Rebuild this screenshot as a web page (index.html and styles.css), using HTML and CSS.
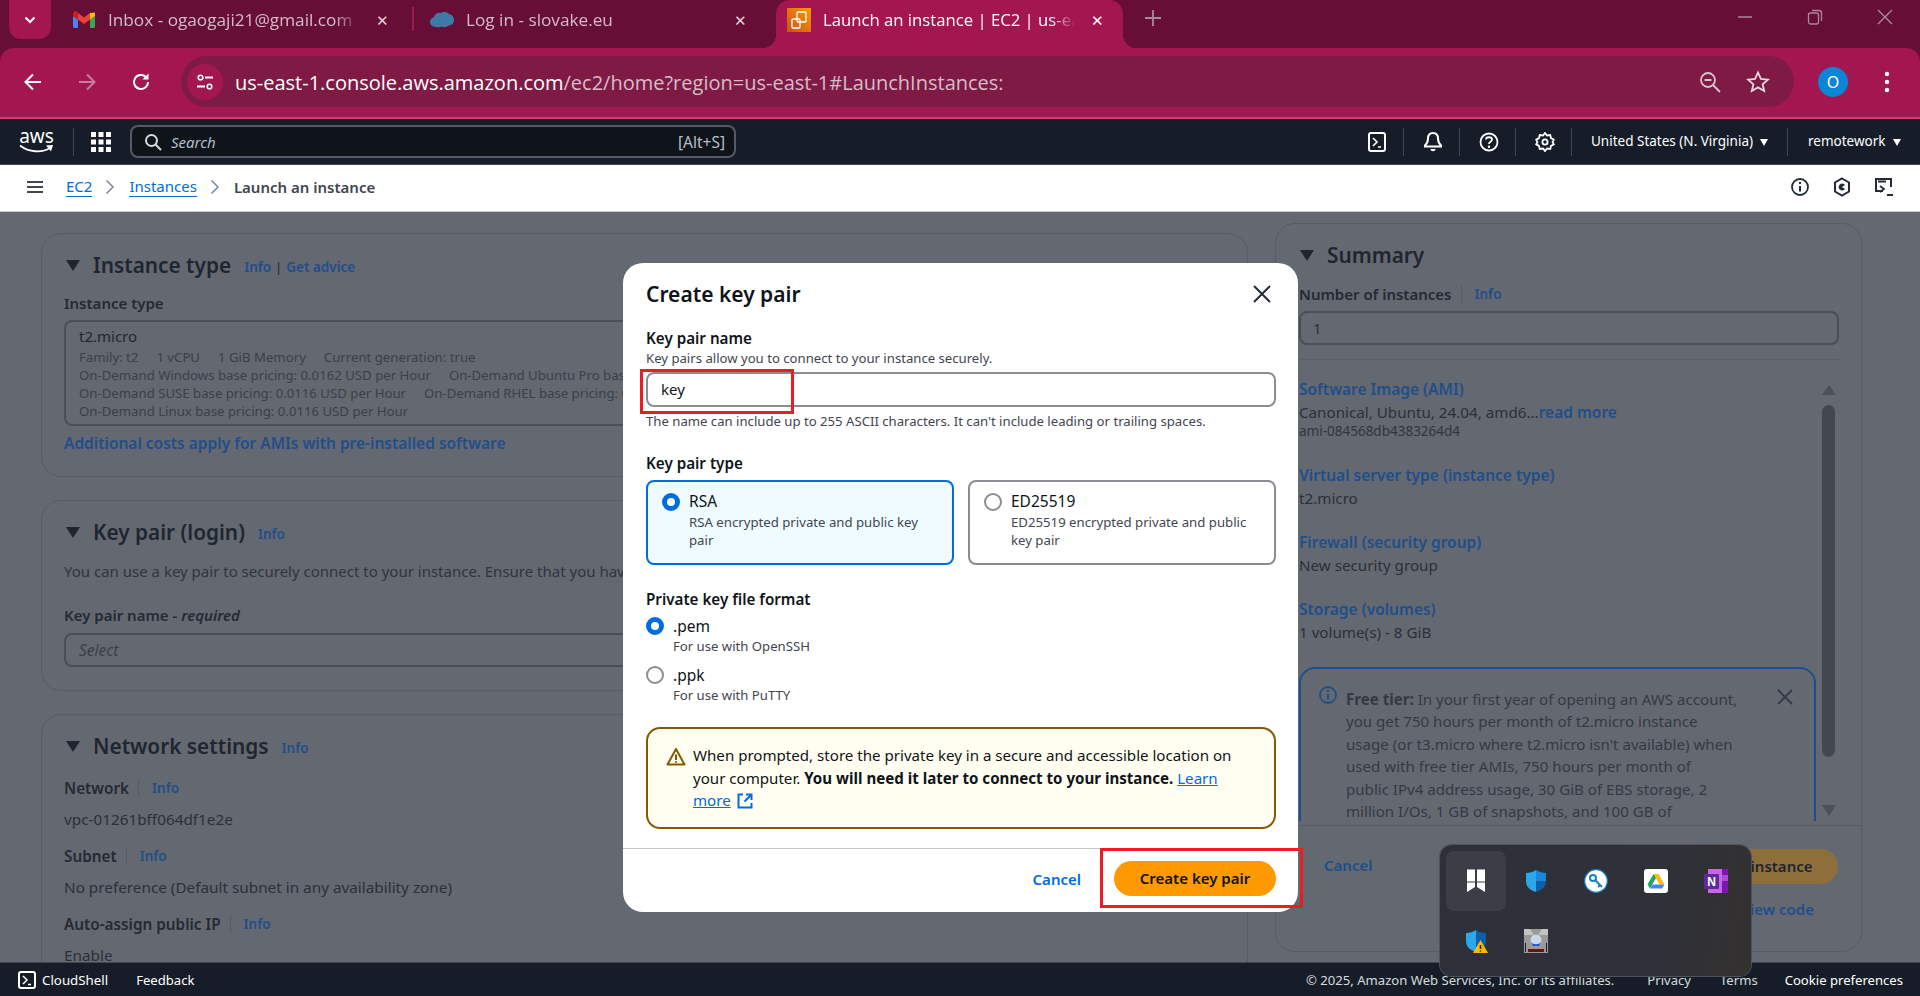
FILE: index.html
```html
<!DOCTYPE HTML>
<html>
<head>
    <title>Launch an instance | EC2 | us-east-1</title>
    <link rel="stylesheet" href="styles.css">
</head>
<body>
<div class="page">

    <div class="tabstrip">
        <div class="tabsearch">
            <svg width="14" height="14" viewBox="0 0 14 14"><path d="M2.5 4.5 7 9l4.5-4.5" fill="none" stroke="#fff" stroke-width="2"/></svg>
        </div>
        <div class="tab first">
            <svg class="favicon" width="22" height="17" viewBox="0 0 22 17">
                <path d="M1.5 17A1.5 1.5 0 0 1 0 15.5V5l5 3.5V17z" fill="#4285f4"/>
                <path d="M17 17V8.5L22 5v10.5a1.5 1.5 0 0 1-1.5 1.5z" fill="#34a853"/>
                <path d="M17 2 22 1.5V5l-5 3.5z" fill="#fbbc04"/>
                <path d="M5 8.5V2l6 4.5L17 2v6.5L11 13z" fill="#ea4335"/>
                <path d="M0 5V2.7C0 .6 2.4-.6 4 .6L5 2v6.5z" fill="#c5221f"/>
            </svg>
            <span class="tabtitle">Inbox - ogaogaji21@gmail.com</span>
            <span class="tabclose">&#10005;</span>
        </div>
        <div class="tabsep"></div>
        <div class="tab second">
            <svg class="favicon" width="24" height="16" viewBox="0 0 24 16"><path d="M6 15C2 15 0 12.5 0 10s1.5-4 3.5-4.5C5 2 8 0 11 1c2-1.5 6-1.5 8 1 3 .5 5 3 5 6s-2 5.5-5.5 5.5c-2 2-5 2-7 1-2 1-4 1-5.5.5z" fill="#3d7aa6"/></svg>
            <span class="tabtitle">Log in - slovake.eu</span>
            <span class="tabclose">&#10005;</span>
        </div>
        <div class="tab active">
            <svg class="favicon" width="24" height="24" viewBox="0 0 24 24">
                <defs><linearGradient id="ec2grad" x1="0" y1="1" x2="1" y2="0"><stop offset="0" stop-color="#c8511b"/><stop offset="1" stop-color="#ff9900"/></linearGradient></defs>
                <rect width="24" height="24" fill="url(#ec2grad)"/>
                <rect x="10" y="4" width="9" height="10" rx="1" fill="none" stroke="#fff" stroke-width="1.3"/>
                <rect x="5" y="11" width="8" height="9" rx="1" fill="none" stroke="#fff" stroke-width="1.3"/>
            </svg>
            <span class="tabtitle">Launch an instance | EC2 | us-east-1</span>
            <span class="tabclose">&#10005;</span>
        </div>
        <div class="newtab">
            <svg width="18" height="18" viewBox="0 0 18 18"><path d="M9 1v16M1 9h16" stroke="#a98a99" stroke-width="1.8"/></svg>
        </div>
        <div class="wincontrols">
            <svg width="16" height="16" viewBox="0 0 16 16"><path d="M1 8h14" stroke="#a98a99" stroke-width="1.5"/></svg>
            <svg width="16" height="16" viewBox="0 0 16 16"><rect x="1.5" y="4" width="10" height="11" rx="2" fill="none" stroke="#a98a99" stroke-width="1.3"/><path d="M5 1.5h7A2.5 2.5 0 0 1 14.5 4v8" fill="none" stroke="#a98a99" stroke-width="1.3"/></svg>
            <svg width="16" height="16" viewBox="0 0 16 16"><path d="M1 1l14 14M15 1 1 15" stroke="#a98a99" stroke-width="1.4"/></svg>
        </div>
    </div>

    <div class="toolbarwrap">
    <div class="toolbar">
        <div class="navbtns">
            <svg width="22" height="22" viewBox="0 0 22 22"><path d="M19 11H4M11 3.5 3.5 11l7.5 7.5" fill="none" stroke="#fff" stroke-width="2"/></svg>
            <svg width="22" height="22" viewBox="0 0 22 22"><path d="M3 11h15M11 3.5 18.5 11 11 18.5" fill="none" stroke="#c77d9b" stroke-width="2"/></svg>
            <svg width="22" height="22" viewBox="0 0 22 22"><path d="M18 11a7 7 0 1 1-2.2-5.1" fill="none" stroke="#fff" stroke-width="2"/><path d="M18.5 2.5v6h-6z" fill="#fff"/></svg>
        </div>
        <div class="omnibox">
            <div class="siteinfo">
                <svg width="20" height="20" viewBox="0 0 20 20"><circle cx="5.5" cy="5.5" r="2.3" fill="none" stroke="#fff" stroke-width="1.6"/><path d="M10 5.5h8M2 14.5h8" stroke="#fff" stroke-width="1.8"/><circle cx="14.5" cy="14.5" r="2.3" fill="none" stroke="#fff" stroke-width="1.6"/></svg>
            </div>
            <div class="url">us-east-1.console.aws.amazon.com<span class="urlpath">/ec2/home?region=us-east-1#LaunchInstances:</span></div>
            <svg class="zoomicon" width="24" height="24" viewBox="0 0 24 24"><circle cx="10" cy="10" r="7" fill="none" stroke="#d9c3cd" stroke-width="1.8"/><path d="M6.5 10h7M15 15l7 7" stroke="#d9c3cd" stroke-width="1.8"/></svg>
            <svg class="staricon" width="24" height="24" viewBox="0 0 24 24"><path d="M12 2.5l2.9 6.4 7 .7-5.3 4.6 1.6 6.8-6.2-3.6-6.2 3.6 1.6-6.8-5.3-4.6 7-.7z" fill="none" stroke="#e8d8df" stroke-width="1.8"/></svg>
        </div>
        <div class="avatar">O</div>
        <svg class="kebab" width="6" height="22" viewBox="0 0 6 22"><circle cx="3" cy="3" r="2.2" fill="#fff"/><circle cx="3" cy="11" r="2.2" fill="#fff"/><circle cx="3" cy="19" r="2.2" fill="#fff"/></svg>
    </div>
    </div>

    <div class="awsnav">
        <div class="awslogo">
            <span>aws</span>
            <svg width="35" height="10" viewBox="0 0 35 10"><path d="M1 1.5c9 7 22 7.5 30 2.5" fill="none" stroke="#fff" stroke-width="1.8"/><path d="M27 1.5l7-.5-2 6.5z" fill="#fff"/></svg>
        </div>
        <div class="navsep logosep"></div>
        <svg class="gridicon" width="20" height="20" viewBox="0 0 20 20" fill="#fff">
            <rect width="5" height="5"/><rect x="7.5" width="5" height="5"/><rect x="15" width="5" height="5"/>
            <rect y="7.5" width="5" height="5"/><rect x="7.5" y="7.5" width="5" height="5"/><rect x="15" y="7.5" width="5" height="5"/>
            <rect y="15" width="5" height="5"/><rect x="7.5" y="15" width="5" height="5"/><rect x="15" y="15" width="5" height="5"/>
        </svg>
        <div class="awssearch">
            <svg width="18" height="18" viewBox="0 0 18 18"><circle cx="7.5" cy="7.5" r="5.5" fill="none" stroke="#d5dbdb" stroke-width="2"/><path d="M11.5 11.5 17 17" stroke="#d5dbdb" stroke-width="2"/></svg>
            <span class="searchtext">Search</span>
            <span class="searchkey">[Alt+S]</span>
        </div>
        <div class="navright">
            <div class="navicon">
                <svg width="18" height="20" viewBox="0 0 18 20"><rect x="1" y="1" width="16" height="18" rx="2" fill="none" stroke="#fff" stroke-width="2"/><path d="M5 6l4 4-4 4M10 15h3" fill="none" stroke="#fff" stroke-width="1.6"/></svg>
            </div>
            <div class="navicon">
                <svg width="18" height="20" viewBox="0 0 18 20"><path d="M9 1c3.5 0 5 2.5 5 5.5 0 4 1.5 5.5 3 7v1H1v-1c1.5-1.5 3-3 3-7C4 3.5 5.5 1 9 1z" fill="none" stroke="#fff" stroke-width="2"/><path d="M6.5 17h5c0 3-5 3-5 0z" fill="#fff"/></svg>
            </div>
            <div class="navicon">
                <svg width="20" height="20" viewBox="0 0 20 20"><circle cx="10" cy="10" r="8.5" fill="none" stroke="#fff" stroke-width="1.8"/><path d="M7 7.5C7 4.5 13 4.5 13 7.5c0 2.5-3 2-3 4.5" fill="none" stroke="#fff" stroke-width="1.8"/><circle cx="10" cy="14.8" r="1.2" fill="#fff"/></svg>
            </div>
            <div class="navicon">
                <svg width="20" height="20" viewBox="0 0 20 20"><path d="M10 1l2 2.5 3.2-.4.8 3 2.8 1.5L17.5 10l1.3 2.4-2.8 1.5-.8 3-3.2-.4L10 19l-2-2.5-3.2.4-.8-3-2.8-1.5L2.5 10 1.2 7.6 4 6.1l.8-3 3.2.4z" fill="none" stroke="#fff" stroke-width="1.8"/><circle cx="10" cy="10" r="2.6" fill="none" stroke="#fff" stroke-width="1.8"/></svg>
            </div>
            <div class="navmenu region">United States (N. Virginia)<span class="navcaret"></span></div>
            <div class="navmenu account">remotework<span class="navcaret"></span></div>
        </div>
    </div>

    <div class="crumbs">
        <div class="hamburger"><span></span><span></span><span></span></div>
        <a class="crumblink">EC2</a>
        <svg class="crumbsep" width="10" height="16" viewBox="0 0 10 16"><path d="M1.5 1.5 8 8l-6.5 6.5" fill="none" stroke="#7d8998" stroke-width="1.5"/></svg>
        <a class="crumblink">Instances</a>
        <svg class="crumbsep" width="10" height="16" viewBox="0 0 10 16"><path d="M1.5 1.5 8 8l-6.5 6.5" fill="none" stroke="#7d8998" stroke-width="1.5"/></svg>
        <span class="crumbcurrent">Launch an instance</span>
        <div class="crumbicons">
            <svg width="20" height="20" viewBox="0 0 20 20"><circle cx="10" cy="10" r="8" fill="none" stroke="#232b37" stroke-width="1.8"/><path d="M10 9v5.5" stroke="#232b37" stroke-width="2"/><circle cx="10" cy="6" r="1.2" fill="#232b37"/></svg>
            <svg width="20" height="20" viewBox="0 0 20 20"><path d="M10 1.5l7 4v9l-7 4-7-4v-9z" fill="none" stroke="#232b37" stroke-width="2"/><path d="M13 8a3.5 3.5 0 1 0 0 4L10 10z" fill="#232b37"/></svg>
            <svg width="20" height="20" viewBox="0 0 20 20"><path d="M9 14H2V2h15v8" fill="none" stroke="#232b37" stroke-width="2"/><path d="M4 4.500h8M6 9l4 3-4 3" fill="none" stroke="#232b37" stroke-width="1.8"/><path d="M13 18h6" stroke="#232b37" stroke-width="2"/></svg>
        </div>
    </div>

    <div class="main">
        <div class="leftcol">
            <section class="panel firstpanel">
                <div class="panelhead">
                    <span class="caret"></span><h2>Instance type</h2>
                    <a class="info">Info</a><span class="pipe">|</span><a class="info">Get advice</a>
                </div>
                <div class="label">Instance type</div>
                <div class="typebox">
                    <div class="typename">t2.micro</div>
                    <div class="typeline"><span>Family: t2</span><span>1 vCPU</span><span>1 GiB Memory</span><span>Current generation: true</span></div>
                    <div class="typeline"><span>On-Demand Windows base pricing: 0.0162 USD per Hour</span><span>On-Demand Ubuntu Pro base pricing: 0.0134 USD per Hour</span></div>
                    <div class="typeline"><span>On-Demand SUSE base pricing: 0.0116 USD per Hour</span><span>On-Demand RHEL base pricing: 0.0716 USD per Hour</span></div>
                    <div class="typeline"><span>On-Demand Linux base pricing: 0.0116 USD per Hour</span></div>
                </div>
                <a class="costs">Additional costs apply for AMIs with pre-installed software</a>
            </section>

            <section class="panel secondpanel">
                <div class="panelhead">
                    <span class="caret"></span><h2>Key pair (login)</h2><a class="info">Info</a>
                </div>
                <p class="keyintro">You can use a key pair to securely connect to your instance. Ensure that you have access to the selected key pair before you launch the instance.</p>
                <div class="label keylabel">Key pair name - <i>required</i></div>
                <div class="selectbox">Select</div>
            </section>

            <section class="panel thirdpanel">
                <div class="panelhead">
                    <span class="caret"></span><h2>Network settings</h2><a class="info">Info</a>
                </div>
                <div class="label fieldlabel">Network<a class="info splitinfo">Info</a></div>
                <div class="fieldvalue">vpc-01261bff064df1e2e</div>
                <div class="label fieldlabel">Subnet<a class="info splitinfo">Info</a></div>
                <div class="fieldvalue">No preference (Default subnet in any availability zone)</div>
                <div class="label fieldlabel">Auto-assign public IP<a class="info splitinfo">Info</a></div>
                <div class="fieldvalue">Enable</div>
            </section>
        </div>

        <aside class="summary">
            <div class="panelhead">
                <span class="caret"></span><h2>Summary</h2>
            </div>
            <div class="label fieldlabel sumlabel">Number of instances<a class="info splitinfo">Info</a></div>
            <div class="countbox">1</div>
            <div class="sumscroll">
                <div class="sumitems">
                    <a class="sumlink firstlink">Software Image (AMI)</a>
                    <div class="sumvalue">Canonical, Ubuntu, 24.04, amd6...<b class="readmore">read more</b></div>
                    <div class="sumsmall">ami-084568db4383264d4</div>
                    <a class="sumlink gap26">Virtual server type (instance type)</a>
                    <div class="sumvalue">t2.micro</div>
                    <a class="sumlink">Firewall (security group)</a>
                    <div class="sumvalue">New security group</div>
                    <a class="sumlink">Storage (volumes)</a>
                    <div class="sumvalue">1 volume(s) - 8 GiB</div>
                    <div class="tierbox">
                        <svg class="tierinfo" width="20" height="20" viewBox="0 0 20 20"><circle cx="10" cy="10" r="8" fill="none" stroke="#1f4f8a" stroke-width="1.8"/><path d="M10 9v5.5" stroke="#1f4f8a" stroke-width="2"/><circle cx="10" cy="6" r="1.2" fill="#1f4f8a"/></svg>
                        <p class="tiertext"><b>Free tier:</b> In your first year of opening an AWS account,<br>you get 750 hours per month of t2.micro instance<br>usage (or t3.micro where t2.micro isn't available) when<br>used with free tier AMIs, 750 hours per month of<br>public IPv4 address usage, 30 GiB of EBS storage, 2<br>million I/Os, 1 GB of snapshots, and 100 GB of</p>
                        <svg class="tierclose" width="16" height="16" viewBox="0 0 16 16"><path d="M1 1l14 14M15 1 1 15" stroke="#343a45" stroke-width="1.8"/></svg>
                    </div>
                </div>
                <div class="sumbar">
                    <span class="arrowup"></span>
                    <span class="thumb"></span>
                    <span class="arrowdown"></span>
                </div>
            </div>
            <div class="sumfoot">
                <div class="sumactions">
                    <a class="sumcancel">Cancel</a>
                    <div class="launchbtn">Launch instance</div>
                </div>
                <a class="previewcode">Preview code</a>
            </div>
        </aside>
    </div>

    <footer class="awsfoot">
        <svg width="18" height="18" viewBox="0 0 18 18"><rect x="1" y="1" width="16" height="16" rx="2" fill="none" stroke="#fff" stroke-width="2"/><path d="M5 5l4 4-4 4M10 13.5h3" fill="none" stroke="#fff" stroke-width="1.5"/></svg>
        <span class="shelltext">CloudShell</span>
        <span class="feedback">Feedback</span>
        <div class="footright">
            <span class="copyright">&copy; 2025, Amazon Web Services, Inc. or its affiliates.</span>
            <span class="privacy">Privacy</span>
            <span class="terms">Terms</span>
            <span class="cookies">Cookie preferences</span>
        </div>
    </footer>

    <div class="dialog">
        <div class="dialoghead">
            <h1>Create key pair</h1>
            <svg width="20" height="20" viewBox="0 0 20 20"><path d="M2 2l16 16M18 2 2 18" stroke="#232b37" stroke-width="2"/></svg>
        </div>
        <div class="dialogbody">
            <div class="dlabel">Key pair name</div>
            <div class="dhint">Key pairs allow you to connect to your instance securely.</div>
            <div class="nameinput">key</div>
            <div class="dhint namenote">The name can include up to 255 ASCII characters. It can't include leading or trailing spaces.</div>

            <div class="dlabel typelabel">Key pair type</div>
            <div class="cards">
                <div class="card selected">
                    <span class="radio on"></span>
                    <div>
                        <div class="cardtitle">RSA</div>
                        <div class="carddesc">RSA encrypted private and public key pair</div>
                    </div>
                </div>
                <div class="card">
                    <span class="radio"></span>
                    <div>
                        <div class="cardtitle">ED25519</div>
                        <div class="carddesc">ED25519 encrypted private and public key pair</div>
                    </div>
                </div>
            </div>

            <div class="dlabel formatlabel">Private key file format</div>
            <div class="format pem">
                <span class="radio on"></span>
                <div>
                    <div class="formatname">.pem</div>
                    <div class="formatuse">For use with OpenSSH</div>
                </div>
            </div>
            <div class="format ppk">
                <span class="radio"></span>
                <div>
                    <div class="formatname">.ppk</div>
                    <div class="formatuse">For use with PuTTY</div>
                </div>
            </div>

            <div class="warning">
                <svg width="20" height="20" viewBox="0 0 20 20"><path d="M10 2 1.5 17.5h17z" fill="none" stroke="#855900" stroke-width="2" stroke-linejoin="round"/><path d="M10 7.5v5.5" stroke="#855900" stroke-width="2"/><circle cx="10" cy="15" r="1.1" fill="#855900"/></svg>
                <p>When prompted, store the private key in a secure and accessible location on your computer. <b>You will need it later to connect to your instance.</b> <a class="learn">Learn more</a> <svg class="exticon" width="16" height="16" viewBox="0 0 16 16"><path d="M6 1.5H1.5v13h13V10" fill="none" stroke="#006ce0" stroke-width="2"/><path d="M9 1.5h5.5V7M14 2 7.5 8.5" fill="none" stroke="#006ce0" stroke-width="2"/></svg></p>
            </div>
        </div>
        <div class="dialogfoot">
            <a class="dcancel">Cancel</a>
            <div class="createbtn">Create key pair</div>
        </div>
        <div class="redbox namebox"></div>
        <div class="redbox createbox"></div>
    </div>

    <div class="tray">
        <div class="trayicon hot">
            <svg width="24" height="24" viewBox="0 0 24 24" fill="#fff"><rect x="3" y="0.5" width="8" height="12"/><rect x="13" y="0.5" width="8" height="12"/><path d="M3 13.5h8V18l-8 5zM13 13.5h8V23l-8-5z"/></svg>
        </div>
        <div class="trayicon">
            <svg width="24" height="24" viewBox="0 0 24 24"><path d="M12 1c3 2 6 3 10 3v8c0 6-4 9-10 11z" fill="#0f5ea8"/><path d="M12 1C9 3 6 4 2 4v8c0 6 4 9 10 11z" fill="#2aa8ea"/><path d="M12 1c3 2 6 3 10 3v8H12z" fill="#1a86d6"/></svg>
        </div>
        <div class="trayicon">
            <svg width="24" height="24" viewBox="0 0 24 24"><circle cx="12" cy="12" r="11.3" fill="#fff" stroke="#1b7fc4" stroke-width="1.2"/><circle cx="9" cy="9" r="3" fill="none" stroke="#1b7fc4" stroke-width="2"/><path d="M11 11l7 7M16 16l-2 2" stroke="#1b7fc4" stroke-width="2"/></svg>
        </div>
        <div class="trayicon">
            <svg width="24" height="24" viewBox="0 0 24 24"><rect width="24" height="24" rx="3" fill="#fff"/><path d="M9.5 5h5l6 10.5h-5z" fill="#fbbc04"/><path d="M9.5 5 3.5 15.5 6 19.5 12 9z" fill="#1fa463"/><path d="M8.5 15.5h12L18 19.5H6z" fill="#4285f4"/></svg>
        </div>
        <div class="trayicon">
            <svg width="24" height="24" viewBox="0 0 24 24"><rect x="4" y="0" width="20" height="24" fill="#ca64ea"/><rect x="18" y="0" width="6" height="24" fill="#7719aa"/><rect x="18" y="6" width="6" height="6" fill="#ae4bd5"/><rect x="0" y="5" width="15" height="15" rx="1" fill="#5b2a9d"/><text class="onenote" x="7.5" y="16.5">N</text></svg>
        </div>
        <div class="trayicon">
            <svg width="24" height="24" viewBox="0 0 24 24"><path d="M12 1c3 2 6 3 10 3v8c0 6-4 9-10 11z" fill="#0f5ea8"/><path d="M12 1C9 3 6 4 2 4v8c0 6 4 9 10 11z" fill="#2aa8ea"/><path d="M16.5 11 9 24h15z" fill="#ffb900"/><path d="M16.5 16v4" stroke="#222" stroke-width="1.6"/><circle cx="16.5" cy="22" r=".8" fill="#222"/></svg>
        </div>
        <div class="trayicon">
            <svg width="24" height="24" viewBox="0 0 24 24"><rect width="24" height="24" fill="#9a9a9a"/><path d="M0 0h6l4 6H0zM24 0h-6l-4 6h10z" fill="#c4c4c4"/><circle cx="12" cy="11" r="5.5" fill="#c9d8e8"/><path d="M7 13c2 3 8 3 10 0l-2 4H9z" fill="#1a58c8"/><path d="M1 14h1v9H1zM22 14h1v9h-1z" fill="#222"/><rect x="4" y="20" width="16" height="3" fill="#6a1414"/></svg>
        </div>
    </div>

</div>
</body>
</html>
```

FILE: styles.css
```css
* {
    box-sizing: border-box;
}

html, body {
    margin: 0;
    padding: 0;
}

body {
    font-family: "Noto Sans", "Open Sans", sans-serif;
    font-size: 14px;
    color: #262b35;
    background: #646871;
}

.page {
    position: relative;
    width: 1920px;
    height: 996px;
    overflow: hidden;
    display: flex;
    flex-direction: column;
}

h1, h2, p {
    margin: 0;
}

/* browser tabs */
.tabstrip {
    height: 48px;
    background: #660e36;
    display: flex;
    align-items: flex-start;
    flex: none;
    font-family: "Open Sans", sans-serif;
}

.tabsearch {
    width: 42px;
    height: 39px;
    margin-left: 9px;
    background: #a31650;
    border-radius: 0 0 12px 12px;
    display: flex;
    align-items: center;
    justify-content: center;
}

.tab {
    height: 39px;
    display: flex;
    align-items: center;
    position: relative;
    flex: none;
}

.tab.first {
    width: 339px;
    margin-left: 22px;
}

.tabsep {
    width: 2px;
    height: 24px;
    margin-top: 7px;
    background: #a31650;
    flex: none;
}

.tab.second {
    width: 345px;
    margin-left: 16px;
}

.tab.active {
    width: 347px;
    height: 48px;
    margin-left: 1px;
    padding-left: 11px;
    padding-bottom: 9px;
    background: #a31650;
    border-radius: 14px 14px 0 0;
}

.tab.active::before,
.tab.active::after {
    content: "";
    position: absolute;
    bottom: 0;
    width: 14px;
    height: 14px;
}

.tab.active::before {
    left: -14px;
    background: radial-gradient(circle at 0 0, transparent 14px, #a31650 14.5px);
}

.tab.active::after {
    right: -14px;
    background: radial-gradient(circle at 100% 0, transparent 14px, #a31650 14.5px);
}

.tabtitle {
    margin-left: 13px;
    font-size: 17.2px;
    color: #d3bcc7;
    white-space: nowrap;
    overflow: hidden;
    width: 252px;
    -webkit-mask-image: linear-gradient(to right, #000 90%, transparent);
    mask-image: linear-gradient(to right, #000 90%, transparent);
}

.second .tabtitle {
    margin-left: 12px;
}

.active .tabtitle {
    margin-left: 12px;
    font-size: 16.7px;
    color: #fff;
}

.tabclose {
    margin-left: 16px;
    font-size: 15px;
    color: #e3d2da;
}

.active .tabclose {
    color: #fff;
}

.newtab {
    margin-left: 21px;
    margin-top: 9px;
}

.wincontrols {
    margin-left: auto;
    margin-top: 9px;
    margin-right: 27px;
    display: flex;
    gap: 54px;
}

/* browser toolbar */
.toolbarwrap {
    background: #660e36;
    flex: none;
}

.toolbar {
    height: 71px;
    background: #a31650;
    border-bottom: 2px solid #c9406f;
    border-radius: 14px 14px 0 0;
    display: flex;
    align-items: center;
    padding: 0 0 2px 22px;
}

.navbtns {
    display: flex;
    gap: 32px;
    width: 159px;
    flex: none;
}

.omnibox {
    width: 1613px;
    height: 51px;
    border-radius: 26px;
    background: #7f1a45;
    display: flex;
    align-items: center;
    padding-left: 6px;
    flex: none;
}

.siteinfo {
    width: 36px;
    height: 36px;
    border-radius: 18px;
    background: #a31650;
    display: flex;
    align-items: center;
    justify-content: center;
    flex: none;
}

.url {
    margin-left: 12px;
    padding-top: 1px;
    font-family: "Open Sans", sans-serif;
    font-size: 20px;
    color: #fff;
    white-space: nowrap;
    flex: 1;
}

.urlpath {
    color: #d7bcc8;
}

.zoomicon {
    margin-right: 24px;
}

.staricon {
    margin-right: 24px;
}

.avatar {
    width: 30px;
    height: 30px;
    margin-left: 24px;
    border-radius: 15px;
    background: #0b85d6;
    color: #fff;
    font-size: 16px;
    line-height: 30px;
    text-align: center;
    flex: none;
}

.kebab {
    margin-left: 36px;
    flex: none;
}

/* console header */
.awsnav {
    height: 46px;
    flex: none;
    background: #161d28;
    border-bottom: 1px solid #424650;
    display: flex;
    align-items: center;
    color: #fff;
}

.awslogo {
    width: 35px;
    margin-left: 19px;
    display: flex;
    flex-direction: column;
    align-items: center;
    flex: none;
}

.awslogo span {
    font-size: 19px;
    line-height: 15px;
    height: 15px;
}

.navsep {
    width: 1px;
    height: 28px;
    background: #424650;
    flex: none;
}

.logosep {
    margin-left: 19px;
}

.gridicon {
    margin-left: 17px;
    flex: none;
}

.awssearch {
    width: 606px;
    height: 33px;
    margin-left: 19px;
    border: 2px solid #545b64;
    border-radius: 8px;
    background: #0f141a;
    display: flex;
    align-items: center;
    padding: 0 9px 0 12px;
    flex: none;
}

.searchtext {
    margin-left: 9px;
    font-size: 15px;
    font-style: italic;
    color: #b6bec9;
}

.searchkey {
    margin-left: auto;
    font-size: 15.5px;
    color: #b6bec9;
}

.navright {
    margin-left: auto;
    display: flex;
    align-items: center;
    height: 100%;
}

.navicon {
    width: 56px;
    height: 28px;
    border-right: 1px solid #424650;
    display: flex;
    align-items: center;
    justify-content: center;
    padding-left: 2px;
}

.navmenu {
    height: 28px;
    padding-bottom: 2px;
    font-size: 13.5px;
    white-space: nowrap;
    display: flex;
    align-items: center;
}

.region {
    width: 216px;
    padding-left: 19px;
    border-right: 1px solid #424650;
}

.account {
    width: 132px;
    padding-left: 20px;
}

.navcaret {
    margin-left: 7px;
    margin-top: 3px;
    width: 0;
    height: 0;
    border-left: 4.5px solid transparent;
    border-right: 4.5px solid transparent;
    border-top: 7px solid #fff;
}

/* breadcrumbs */
.crumbs {
    height: 47px;
    flex: none;
    background: #fff;
    border-bottom: 1px solid #c6c6cd;
    display: flex;
    align-items: center;
    padding-left: 27px;
    padding-bottom: 2px;
    font-size: 15px;
}

.hamburger {
    width: 16px;
    margin-right: 23px;
    flex: none;
}

.hamburger span {
    display: block;
    height: 2px;
    background: #414750;
    margin: 3px 0;
}

.crumblink {
    color: #006ce0;
    border-bottom: 1px solid #006ce0;
    line-height: 19px;
}

.crumbsep {
    margin: 0 14px 0 13px;
    flex: none;
}

.crumbcurrent {
    font-weight: 600;
    color: #424650;
}

.crumbicons {
    margin-left: auto;
    margin-right: 26px;
    display: flex;
    gap: 22px;
}

/* dimmed page underneath */
.main {
    flex: 1;
    min-height: 0;
    overflow: hidden;
    display: flex;
    align-items: flex-start;
    padding-left: 41px;
}

.leftcol {
    width: 1207px;
    padding-top: 21px;
    flex: none;
}

.panel {
    border: 1px solid #585c66;
    border-radius: 20px;
    padding: 15px 22px 0;
    overflow: hidden;
    margin-bottom: 23px;
}

.firstpanel {
    height: 244px;
}

.secondpanel {
    height: 191px;
}

.thirdpanel {
    height: 300px;
    margin-bottom: 0;
}

.panelhead {
    height: 32px;
    display: flex;
    align-items: center;
}

.caret {
    width: 0;
    height: 0;
    margin-left: 2px;
    margin-right: 13px;
    border-left: 7.5px solid transparent;
    border-right: 7.5px solid transparent;
    border-top: 11px solid #20262f;
}

.panelhead h2 {
    font-size: 20.8px;
    font-weight: 600;
    color: #20262f;
    margin-right: 13px;
}

.info {
    color: #1f4f8a;
    font-size: 13.5px;
    font-weight: 600;
    margin-top: 3px;
}

.pipe {
    margin: 3px 4px 0;
    font-size: 13px;
    color: #20262f;
}

.label {
    font-size: 15px;
    font-weight: 600;
    line-height: 18px;
    color: #252a33;
    margin-top: 13px;
}

.typebox {
    height: 106px;
    margin-top: 8px;
    border: 2px solid #4a4e58;
    border-radius: 8px;
    padding: 3px 13px;
    overflow: hidden;
    white-space: nowrap;
}

.typename {
    font-size: 15px;
    line-height: 23px;
    color: #22272f;
}

.typeline {
    font-size: 13.2px;
    line-height: 18px;
    color: #3b4049;
}

.typeline span {
    margin-right: 18px;
}

.costs {
    display: block;
    margin-top: 7px;
    line-height: 20px;
    font-size: 15.5px;
    font-weight: 600;
    color: #1f4f8a;
}

.keyintro {
    margin-top: 13px;
    line-height: 20px;
    font-size: 15px;
    color: #30353e;
    white-space: nowrap;
}

.keylabel {
    margin-top: 25px;
}

.selectbox {
    height: 34px;
    margin-top: 9px;
    border: 2px solid #4a4e58;
    border-radius: 8px;
    padding: 0 13px;
    line-height: 30px;
    font-size: 15.5px;
    font-style: italic;
    color: #3b4049;
}

.fieldlabel {
    display: flex;
    align-items: center;
    margin-top: 17px;
    font-size: 15.3px;
}

.thirdpanel .fieldlabel + .fieldvalue + .fieldlabel {
    margin-top: 18px;
}

.splitinfo {
    margin-left: 9px;
    margin-top: 0;
    padding-left: 13px;
    border-left: 1px solid #585c66;
    line-height: 18px;
}

.fieldvalue {
    margin-top: 12px;
    line-height: 20px;
    font-size: 15.3px;
    color: #2b3039;
}

/* summary panel */
.summary {
    width: 587px;
    height: 729px;
    margin-top: 11px;
    margin-left: 27px;
    border: 1px solid #585c66;
    border-radius: 20px;
    padding-top: 15px;
    flex: none;
    display: flex;
    flex-direction: column;
}

.summary .panelhead {
    padding-left: 22px;
}

.summary .sumlabel {
    margin-left: 23px;
    margin-top: 14px;
    font-size: 15px;
}

.countbox {
    width: 540px;
    height: 34px;
    margin: 8px 0 0 23px;
    border: 2px solid #4a4e58;
    border-radius: 8px;
    padding: 0 12px;
    line-height: 30px;
    font-size: 15px;
    color: #2b3039;
    flex: none;
}

.sumscroll {
    height: 462px;
    margin: 14px 0 0 23px;
    width: 540px;
    border-top: 1px solid #5b5f69;
    display: flex;
    overflow: hidden;
    flex: none;
}

.sumitems {
    width: 517px;
    padding-top: 19px;
    flex: none;
}

.sumlink {
    display: block;
    margin-top: 24px;
    line-height: 20px;
    font-size: 15.5px;
    font-weight: 600;
    color: #1f4f8a;
}

.firstlink {
    margin-top: 0;
}

.gap26 {
    margin-top: 26px;
}

.sumvalue {
    margin-top: 3px;
    line-height: 20px;
    font-size: 15.2px;
    color: #2b3039;
}

.readmore {
    font-size: 15.5px;
    font-weight: 600;
    color: #1f4f8a;
}

.sumsmall {
    margin-top: 1px;
    line-height: 16px;
    font-size: 13.5px;
    color: #30353e;
}

.tierbox {
    position: relative;
    height: 240px;
    margin-top: 25px;
    border: 2px solid #1f4f8a;
    border-radius: 16px;
    padding: 19px 0 0 45px;
}

.tierinfo {
    position: absolute;
    left: 17px;
    top: 16px;
}

.tierclose {
    position: absolute;
    right: 21px;
    top: 20px;
}

.tiertext {
    line-height: 22.4px;
    font-size: 15.1px;
    color: #343a45;
    white-space: nowrap;
}

.sumbar {
    width: 13px;
    margin-left: 6px;
    display: flex;
    flex-direction: column;
    align-items: center;
    padding-top: 25px;
    flex: none;
}

.arrowup {
    width: 0;
    height: 0;
    border-left: 7px solid transparent;
    border-right: 7px solid transparent;
    border-bottom: 10px solid #4d515a;
}

.thumb {
    width: 13px;
    height: 352px;
    margin-top: 10px;
    border-radius: 7px;
    background: #43474f;
}

.arrowdown {
    width: 0;
    height: 0;
    margin-top: 48px;
    border-left: 7px solid transparent;
    border-right: 7px solid transparent;
    border-top: 11px solid #4d515a;
}

.sumfoot {
    flex: 1;
    border-top: 1px solid #585c66;
    padding: 23px 23px 0 48px;
    margin-top: 4px;
}

.sumactions {
    display: flex;
    align-items: center;
    justify-content: space-between;
}

.sumcancel {
    margin-top: -4px;
    font-weight: 600;
    color: #1f4f8a;
    font-size: 15px;
}

.launchbtn {
    width: 170px;
    height: 35px;
    border-radius: 18px;
    background: #8e6f3c;
    color: #20262f;
    font-weight: 600;
    font-size: 15px;
    line-height: 35px;
    text-align: center;
}

.previewcode {
    display: block;
    margin-top: 15px;
    margin-right: 24px;
    text-align: right;
    font-weight: 600;
    font-size: 15px;
    line-height: 20px;
    color: #1f4f8a;
}

/* console footer */
.awsfoot {
    height: 34px;
    flex: none;
    background: #161d28;
    color: #fff;
    display: flex;
    align-items: center;
    padding-left: 18px;
    font-size: 13.1px;
    border-top: 1px solid #424650;
}

.shelltext {
    margin-left: 6px;
    font-size: 13.3px;
}

.feedback {
    margin-left: 28px;
}

.footright {
    margin-left: auto;
    margin-right: 17px;
    display: flex;
}

.copyright {
    color: #d5dbdb;
}

.privacy {
    margin-left: 33px;
    color: #d5dbdb;
}

.terms {
    margin-left: 29px;
    color: #d5dbdb;
}

.cookies {
    margin-left: 27px;
}

/* modal */
.dialog {
    position: absolute;
    left: 623px;
    top: 263px;
    width: 675px;
    height: 649px;
    background: #fff;
    border-radius: 20px;
    color: #0f141a;
}

.dialoghead {
    height: 62px;
    padding: 0 26px 0 23px;
    display: flex;
    align-items: center;
    justify-content: space-between;
}

.dialoghead h1 {
    font-size: 21px;
    font-weight: 600;
    line-height: 30px;
}

.dialogbody {
    padding: 0 22px 0 23px;
}

.dlabel {
    font-weight: 600;
    line-height: 18px;
    font-size: 15.2px;
    margin-top: 4px;
}

.dhint {
    font-size: 13.15px;
    line-height: 18px;
    color: #424650;
    margin-top: 2px;
}

.nameinput {
    height: 35px;
    margin-top: 5px;
    border: 2px solid #8c8c94;
    border-radius: 8px;
    padding: 0 13px;
    line-height: 31px;
    font-size: 15px;
}

.namenote {
    margin-top: 5px;
}

.typelabel {
    margin-top: 24px;
}

.cards {
    display: flex;
    gap: 14px;
    margin-top: 8px;
}

.card {
    flex: 1;
    height: 85px;
    border: 2px solid #8c8c94;
    border-radius: 8px;
    padding: 10px 14px 0;
    display: flex;
    gap: 9px;
}

.card.selected {
    flex: none;
    width: 308px;
    border-color: #006ce0;
    background: #f0fbff;
}

.radio {
    width: 18px;
    height: 18px;
    border-radius: 9px;
    border: 2px solid #8c8c94;
    background: #fff;
    flex: none;
    margin-top: 1px;
}

.radio.on {
    border: 5px solid #006ce0;
}

.cardtitle {
    font-size: 15.5px;
    line-height: 18px;
}

.carddesc {
    margin-top: 3px;
    font-size: 13.2px;
    line-height: 18px;
    color: #424650;
}

.formatlabel {
    margin-top: 25px;
}

.format {
    display: flex;
    gap: 9px;
}

.pem {
    margin-top: 9px;
}

.ppk {
    margin-top: 11px;
}

.format .radio {
    margin-top: 0;
}

.formatname {
    font-size: 15.5px;
    line-height: 18px;
}

.formatuse {
    margin-top: 2px;
    font-size: 13.15px;
    line-height: 18px;
    color: #424650;
}

.warning {
    height: 102px;
    margin-top: 23px;
    border: 2px solid #855900;
    border-radius: 14px;
    background: #fffef0;
    padding: 16px 20px 0 18px;
    display: flex;
    gap: 7px;
}

.warning svg {
    flex: none;
    margin-top: 2px;
}

.warning p {
    font-size: 15.1px;
    line-height: 22.5px;
    margin-top: -1px;
}

.learn {
    color: #006ce0;
    text-decoration: underline;
}

.warning .exticon {
    display: inline-block;
    vertical-align: -3px;
    margin: 0 0 0 2px;
}

.dialogfoot {
    position: absolute;
    left: 0;
    right: 0;
    top: 585px;
    height: 64px;
    border-top: 1px solid #c6c6cd;
    display: flex;
    align-items: center;
    justify-content: flex-end;
    padding: 0 22px 4px 0;
}

.dcancel {
    font-weight: 600;
    font-size: 15px;
    color: #006ce0;
    margin-right: 33px;
}

.createbtn {
    width: 162px;
    height: 35px;
    border-radius: 18px;
    background: #ff9900;
    font-weight: 600;
    font-size: 15px;
    line-height: 35px;
    text-align: center;
    color: #0f141a;
}

.redbox {
    position: absolute;
    border: 3px solid #ec1c24;
}

.namebox {
    left: 17px;
    top: 106px;
    width: 154px;
    height: 45px;
}

.createbox {
    left: 477px;
    top: 585px;
    width: 203px;
    height: 60px;
}

/* taskbar tray popup */
.tray {
    position: absolute;
    left: 1440px;
    top: 845px;
    width: 311px;
    height: 131px;
    padding: 6px;
    border-radius: 12px;
    background: linear-gradient(100deg, #2d3039, #2e3138 70%, #34302f);
    box-shadow: 0 0 0 1px #50535c;
    display: grid;
    grid-template-columns: repeat(5, 60px);
    grid-auto-rows: 60px;
}

.trayicon {
    display: flex;
    align-items: center;
    justify-content: center;
    border-radius: 8px;
}

.trayicon.hot {
    background: #3b3e46;
}

.onenote {
    font-family: "Liberation Sans", sans-serif;
    font-weight: bold;
    font-size: 12px;
    fill: #fff;
    text-anchor: middle;
}
```
